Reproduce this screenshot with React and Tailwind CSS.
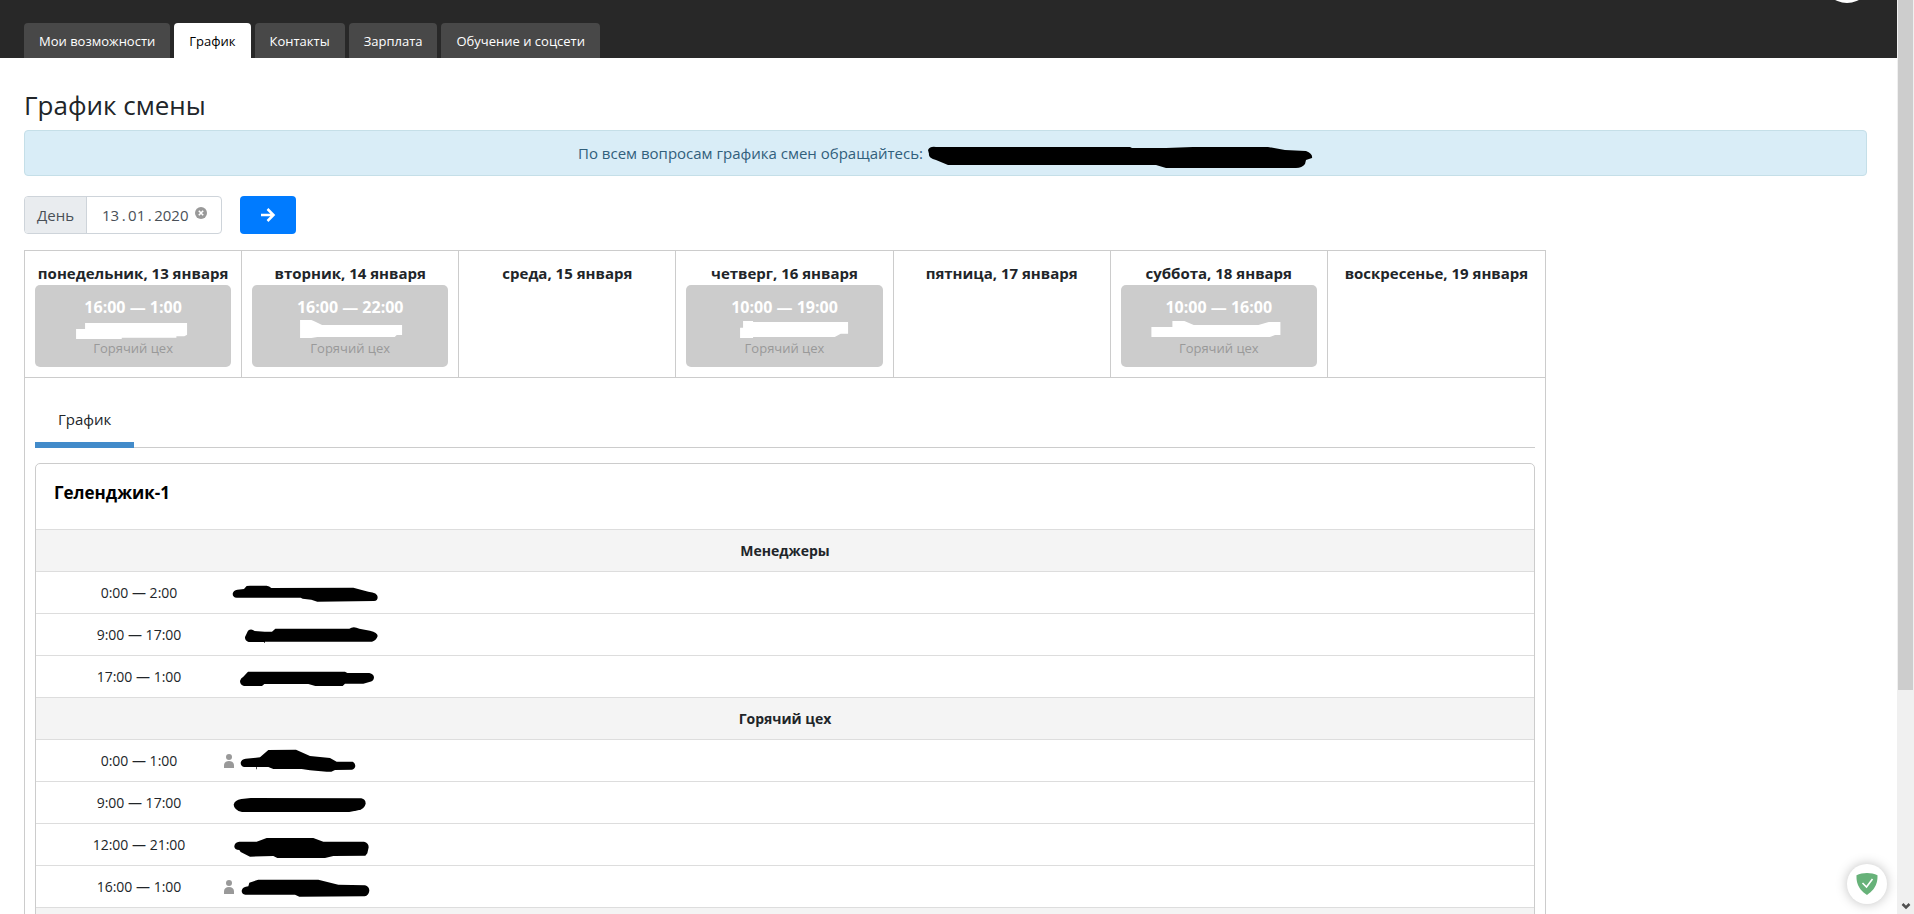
import React, { useState } from "react";

const menu = ["Мои возможности", "График", "Контакты", "Зарплата", "Обучение и соцсети"];

const week = [
  {
    day: "понедельник, 13 января",
    time: "16:00 — 1:00",
    mark: "M123 30H150V12H456V47L448 52H424V56H260V60H123Z",
  },
  {
    day: "вторник, 14 января",
    time: "16:00 — 22:00",
    mark: "M144 3H178L190 8L210 18H450V48H434L428 54H196L178 57H144Z",
  },
  { day: "среда, 15 января" },
  {
    day: "четверг, 16 января",
    time: "10:00 — 19:00",
    mark: "M162 26H171V6H201V9H486V44H464L446 54H201V57H162Z",
  },
  { day: "пятница, 17 января" },
  {
    day: "суббота, 18 января",
    time: "10:00 — 16:00",
    mark: "M91 24H154V6H190L218 18H412L443 9H478V48H462L446 54H91Z",
  },
  { day: "воскресенье, 19 января" },
];

const groups = [
  {
    name: "Менеджеры",
    rows: [
      {
        time: "0:00 — 2:00",
        mark: "M26 65Q28 54 40 53L60 51L68 42Q72 41 78 41L128 41Q136 42 142 48L388 47L433 59Q461 62 461 75Q461 87 450 87L280 89L262 83L236 80L230 77L38 77Q26 76 26 65Z",
      },
      {
        time: "9:00 — 17:00",
        mark: "M63 69L72 50Q82 42 92 51L122 53L144 53L154 44L376 44Q388 35 406 44L438 50Q461 56 461 66Q458 78 444 83L123 83V87H121V84L74 84Q62 80 63 69Z",
      },
      {
        time: "17:00 — 1:00",
        mark: "M48 75Q50 66 58 62L72 47L363 47L370 51L436 51Q450 54 450 65Q448 76 436 78L418 83L363 83L356 90L274 90L253 84L121 84L114 90L60 90Q48 87 48 75Z",
      },
    ],
  },
  {
    name: "Горячий цех",
    rows: [
      {
        time: "0:00 — 1:00",
        person: true,
        mark: "M20 68Q22 57 35 56L78 52L103 30L186 29L228 48L288 54L308 65L356 65Q364 70 364 78Q362 88 354 89L303 90L292 95L278 95L228 91L203 87L118 87L103 81L69 81V88H67V81L30 81Q20 78 20 68Z",
      },
      {
        time: "9:00 — 17:00",
        mark: "M29 68Q32 54 52 51L80 48L412 49Q425 52 425 65Q422 80 402 85L376 90L54 90Q30 84 29 68Z",
      },
      {
        time: "12:00 — 21:00",
        mark: "M31 66Q33 54 46 53L98 53L128 42L268 42L298 53L420 53Q434 56 434 70L430 88L424 95L328 96L303 102L160 102L148 96L78 98L50 84L46 78Q30 76 31 66Z",
      },
      {
        time: "16:00 — 1:00",
        person: true,
        mark: "M23 74Q26 62 43 61L46 50L73 41L253 41L313 56L393 58Q406 62 406 74Q404 88 392 91L196 92L183 86L34 86Q23 84 23 74Z",
      },
    ],
  },
  { name: "", rows: [] },
];

const PersonIcon = () => (
  <svg className="w-[10px] h-[14px] shrink-0" viewBox="0 0 10 14" fill="#999">
    <circle cx="5" cy="3" r="3" />
    <path d="M0 14v-2.500C0 8.500 2 7 5 7s5 1.500 5 4.500V14z" />
  </svg>
);

const Header = () => (
  <header className="relative bg-[#282828] pt-[23px] px-6 overflow-hidden">
    <nav className="flex gap-1">
      {menu.map((item) => (
        <a
          key={item}
          href="#"
          className={`px-[15px] h-[35px] leading-[36px] text-[13px] rounded-t ${
            item === "График" ? "bg-white text-black" : "bg-[#484848] text-white"
          }`}
        >
          {item}
        </a>
      ))}
    </nav>
    <div className="absolute right-[25px] -top-[47px] w-[50px] h-[50px] rounded-full bg-white" />
  </header>
);

const Week = () => (
  <div className="grid grid-cols-7 border-b border-[#ccc]">
    {week.map((item) => (
      <div key={item.day} className="p-[10px] border-r border-[#ccc] last:border-r-0 text-center">
        <div className="font-bold text-[15px] leading-6 whitespace-nowrap flex justify-center">{item.day}</div>
        {item.time && (
          <div className="bg-[#ccc] rounded-[5px] py-[10px]">
            <div className="font-bold leading-6 text-white">{item.time}</div>
            <svg className="block w-full h-[19px] overflow-visible" viewBox="0 0 588 57" fill="#fff">
              <path d={item.mark} />
            </svg>
            <div className="text-[13px] leading-5 -mb-px text-[#999]">Горячий цех</div>
          </div>
        )}
      </div>
    ))}
  </div>
);

const Schedule = () => (
  <div className="border border-[#ccc] rounded-t-[5px]">
    <h2 className="px-[18px] pt-4 pb-[23px] text-[17px] leading-[26px] font-bold text-black">Геленджик-1</h2>
    <table className="w-full text-sm">
      <tbody>
        {groups.map((group) => (
          <React.Fragment key={group.name}>
            <tr className="h-[42px] border-t border-[#ddd] bg-[#f4f4f4]">
              <th colSpan={2} className="font-bold">
                {group.name}
              </th>
            </tr>
            {group.rows.map((row) => (
              <tr key={row.time} className="h-[42px] border-t border-[#ddd]">
                <td className="w-[188px] pl-[18px] text-center">{row.time}</td>
                <td className="p-0">
                  <div className="flex items-center">
                    {row.person && <PersonIcon />}
                    <svg className="w-[160px] h-[41px]" viewBox="0 0 480 123">
                      <path d={row.mark} />
                    </svg>
                  </div>
                </td>
              </tr>
            ))}
          </React.Fragment>
        ))}
      </tbody>
    </table>
  </div>
);

const App = () => {
  // thin spaces around the dots
  const [date, setDate] = useState("13\u2009.\u200901\u2009.\u20092020");

  return (
    <div className="flex h-screen overflow-hidden bg-white text-[#212529] font-['Open_Sans','Noto_Sans',sans-serif]">
      <div className="flex-1 min-w-0 overflow-hidden">
        <Header />
        <main className="pl-6 pr-[30px] pt-[30px]">
          <h1 className="text-[26px] leading-[34px] mb-2">График смены</h1>
          <div className="flex items-center justify-center gap-[5px] h-[46px] rounded border border-[#c5dfe8] bg-[#d9edf7] text-[15px] text-[#31607c]">
            <span>По всем вопросам графика смен обращайтесь:</span>
            <svg className="w-[385px] h-[23px] mt-2" viewBox="0 0 385 23">
              <path d="M0 4Q2 0 8 1L202 1L204 2L238 2L265 1L340 1L357 4L378 5Q385 8 384 12L378 14L377 18Q374 22 368 22L238 22L228 19L20 19L8 14Q0 12 1 8Z" />
            </svg>
          </div>

          <form className="flex mt-5" onSubmit={(e) => e.preventDefault()}>
            <div className="flex h-[38px] rounded border border-[#ced4da] overflow-hidden text-[15px] text-[#495057]">
              <label htmlFor="day" className="px-3 leading-9 bg-[#e9ecef] border-r border-[#ced4da]">
                День
              </label>
              <input
                id="day"
                type="text"
                className="w-[108px] pl-[15px] outline-none"
                value={date}
                onChange={(e) => setDate(e.target.value)}
              />
              <button
                type="button"
                aria-label="Очистить"
                className="w-[26px] pb-1 flex items-center"
                onClick={() => setDate("")}
              >
                <svg className="w-3 h-3" viewBox="0 0 12 12">
                  <circle cx="6" cy="6" r="6" fill="#999" />
                  <path d="M3.800 3.800l4.400 4.400M8.200 3.800l-4.400 4.400" stroke="#fff" strokeWidth="1.600" />
                </svg>
              </button>
            </div>
            <button
              type="submit"
              aria-label="Показать"
              className="ml-[18px] w-14 h-[38px] rounded bg-[#007bff] flex items-center justify-center"
            >
              <svg className="w-4 h-4" viewBox="0 0 16 16" fill="none" stroke="#fff" strokeWidth="2.500">
                <path d="M1 8h12M7.500 2L13.500 8L7.500 14" />
              </svg>
            </button>
          </form>

          <div className="mt-4 w-full max-w-[1522px] border border-[#ccc]">
            <Week />
            <div className="px-[10px] pt-[22px]">
              <div className="border-b border-[#ccc] mb-[15px] flex">
                <a
                  href="#"
                  className="-mb-px px-[23px] h-[48px] text-[15px] leading-[39px] border-b-[6px] border-[#428bca]"
                >
                  График
                </a>
              </div>
              <Schedule />
            </div>
          </div>
        </main>
      </div>

      {/* scroll rail */}
      <div className="w-[17px] px-px bg-[#f0f0f0] flex flex-col justify-between items-center">
        <div className="w-full h-[690px] bg-[#cdcdcd]" />
        <svg className="w-[10px] h-[10px] mb-[3px]" viewBox="0 0 10 10" fill="none" stroke="#505050" strokeWidth="2.500">
          <path d="M1.500 3l3.500 3.500l3.500-3.500" />
        </svg>
      </div>

      <button
        type="button"
        aria-label="Защита"
        className="fixed right-[27px] bottom-[10px] w-10 h-10 rounded-full bg-white shadow-[0_0_12px_rgba(0,0,0,0.25)] flex items-center justify-center"
      >
        <svg className="w-[22px] h-[22px]" viewBox="0 0 22 22">
          <path d="M11 0C14.500 0 18.500 .8 21.500 2.300C21.500 6 22 15 11 22C0 15 .5 6 .5 2.300C3.500 .8 7.500 0 11 0Z" fill="#67b279" />
          <path d="M6.500 10l4 4l6-8" fill="none" stroke="#fff" strokeWidth="1.600" />
        </svg>
      </button>
    </div>
  );
};

export default App;
